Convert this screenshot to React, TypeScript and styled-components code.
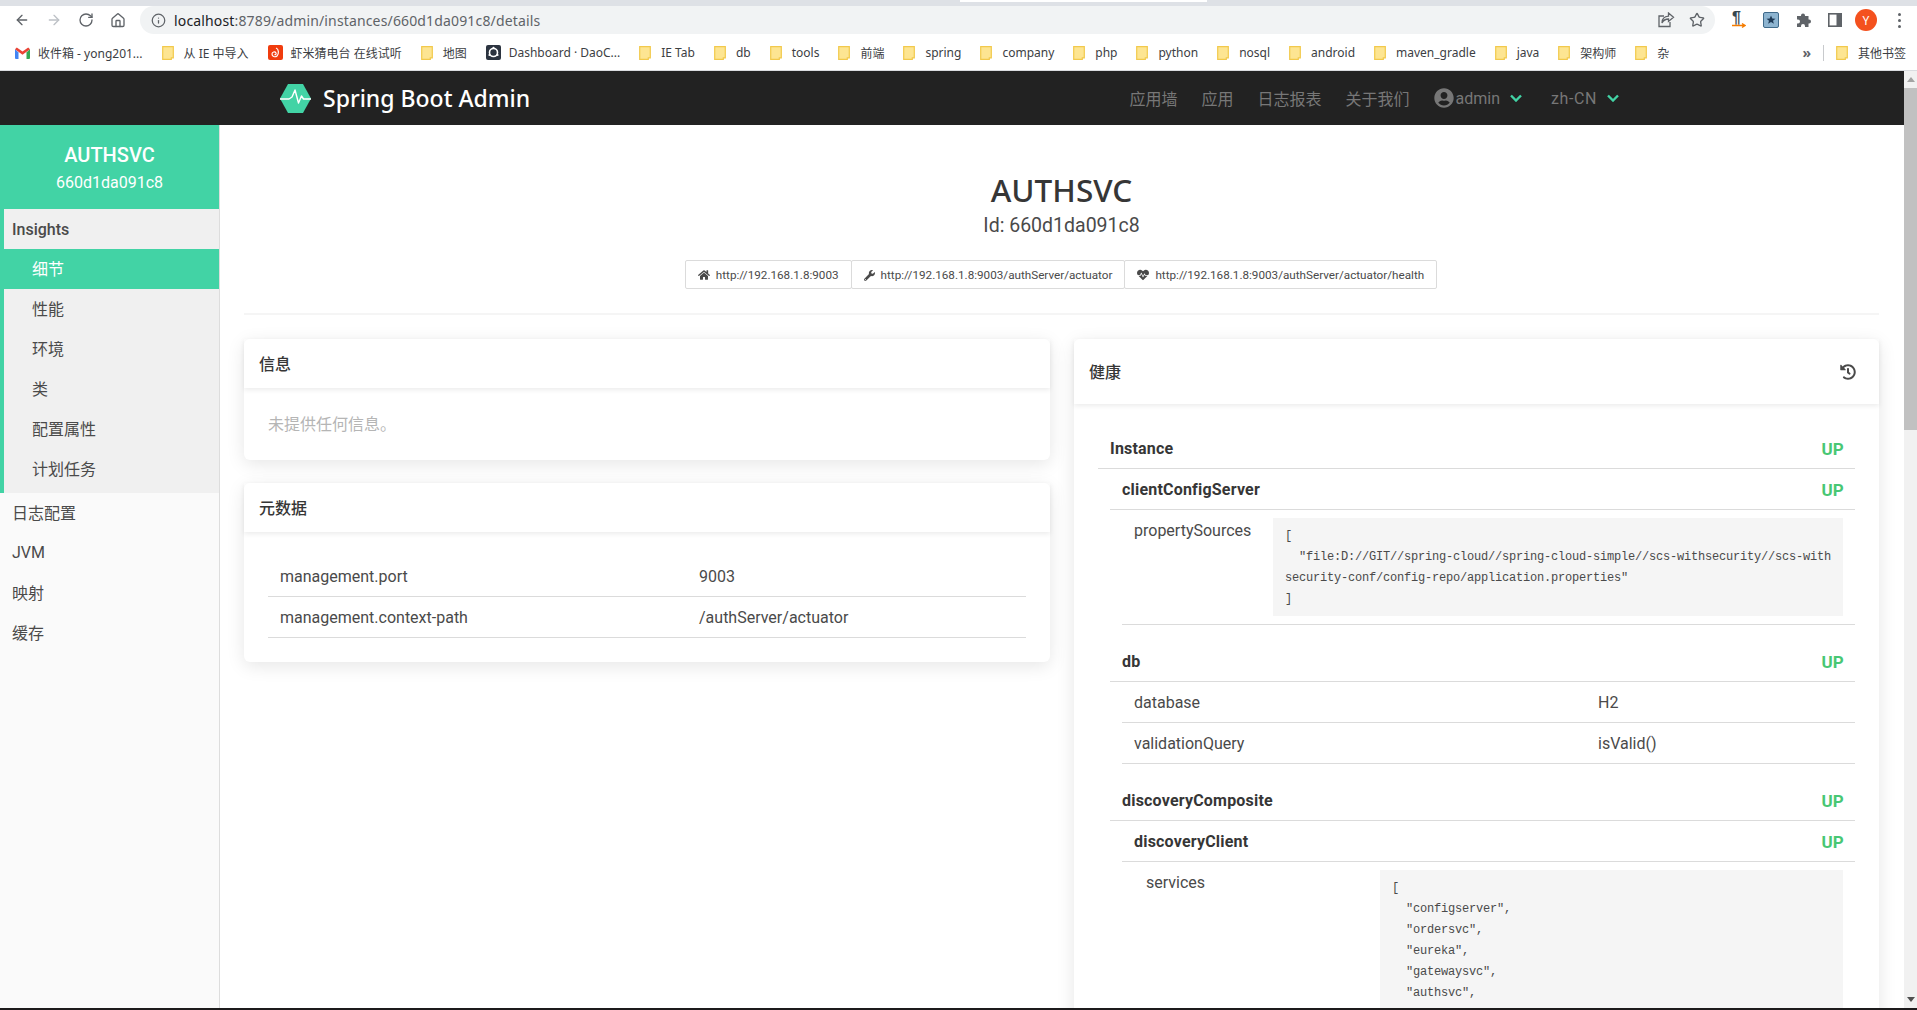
import type { ReactNode } from 'react';
import styled, { createGlobalStyle } from 'styled-components';
import { ArrowLeft, ArrowRight, House, Info, RotateCw, Star } from 'lucide-react';
import { FaHeartbeat, FaHistory, FaHome, FaUserCircle, FaWrench } from 'react-icons/fa';

const FONT = `Roboto, "Noto Sans CJK SC", sans-serif`;
const CHROME_FONT = `"Noto Sans", "Noto Sans CJK SC", sans-serif`;
const GREEN = '#42d3a5';

const GlobalStyle = createGlobalStyle`
  html, body {
    margin: 0;
    padding: 0;
    height: 100%;
    overflow: hidden;
    background: #fff;
  }
  * {
    box-sizing: border-box;
  }
  body {
    font-family: ${FONT};
    font-size: 16px;
    color: #4a4a4a;
  }
`;

const Screen = styled.div`
  width: 1917px;
  height: 1010px;
  display: flex;
  flex-direction: column;
  overflow: hidden;
`;

/* browser chrome */
const TabStrip = styled.div`
  height: 6px;
  flex: none;
  background: #dee1e6;
  padding-left: 960px;
`;
const ActiveTab = styled.div`
  width: 247px;
  height: 2px;
  background: #fff;
`;
const Toolbar = styled.div`
  height: 30px;
  flex: none;
  display: flex;
  align-items: center;
  padding: 0 0 2px 14px;
  background: #fff;
  font-family: ${CHROME_FONT};
`;
const ToolButton = styled.span<{ $dim?: boolean }>`
  width: 16px;
  height: 16px;
  margin-right: 16px;
  display: flex;
  align-items: center;
  justify-content: center;
  flex: none;
  color: ${(p) => (p.$dim ? '#bdc1c6' : '#5f6368')};
`;
const Omnibox = styled.div`
  width: 1575px;
  height: 28px;
  margin-left: -2px;
  flex: none;
  display: flex;
  align-items: center;
  padding: 0 10px 0 11px;
  border-radius: 14px;
  background: #f1f3f4;
  font-size: 14px;
  letter-spacing: 0.15px;
  color: #5f6368;
`;
const UrlHost = styled.span`
  margin-left: 8px;
  color: #202124;
`;
const OmniActions = styled.div`
  margin-left: auto;
  display: flex;
  align-items: center;
  gap: 14px;
  color: #5f6368;
`;
const ExtensionTray = styled.div`
  display: flex;
  align-items: center;
  gap: 17px;
  margin-left: 17px;
`;
const Avatar = styled.span`
  width: 22px;
  height: 22px;
  margin-left: -4px;
  border-radius: 50%;
  background: #f4511e;
  color: #fff;
  font-size: 12px;
  display: flex;
  align-items: center;
  justify-content: center;
`;
const MenuDots = styled.span`
  margin-left: 4px;
  width: 4px;
  display: flex;
  flex-direction: column;
  gap: 3px;
  i {
    width: 3px;
    height: 3px;
    border-radius: 50%;
    background: #5f6368;
  }
`;
const Bookmarks = styled.div`
  height: 35px;
  flex: none;
  display: flex;
  align-items: center;
  gap: 19px;
  padding: 0 0 1px 15px;
  background: #fff;
  border-bottom: 1px solid #dadce0;
  font-family: ${CHROME_FONT};
  font-size: 12px;
  color: #3c4043;
`;
const Bookmark = styled.span<{ $favicon?: boolean }>`
  display: flex;
  align-items: center;
  gap: ${(p) => (p.$favicon ? 8 : 10)}px;
  white-space: nowrap;
`;
const BookmarkEnd = styled.div`
  margin-left: auto;
  display: flex;
  align-items: center;
  gap: 12px;
  padding-right: 11px;
`;
const Chevrons = styled.span`
  font-size: 14px;
  font-weight: 700;
  color: #5f6368;
  line-height: 1;
`;
const Separator = styled.span`
  width: 1px;
  height: 16px;
  background: #c8cacd;
`;

/* spring boot admin page */
const Viewport = styled.div`
  height: 937px;
  flex: none;
  display: flex;
`;
const Page = styled.div`
  flex: 1;
  min-width: 0;
  display: flex;
  flex-direction: column;
`;
const Scrollbar = styled.div`
  width: 13px;
  flex: none;
  display: flex;
  flex-direction: column;
  align-items: center;
  background: #f1f1f1;
`;
const ScrollArrow = styled.span<{ $down?: boolean }>`
  height: 17px;
  flex: none;
  width: 100%;
  display: flex;
  align-items: center;
  justify-content: center;
  &::before {
    content: '';
    border-left: 4px solid transparent;
    border-right: 4px solid transparent;
    ${(p) =>
      p.$down
        ? 'border-top: 5px solid #505050;'
        : 'border-bottom: 5px solid #a3a3a3;'}
  }
`;
const ScrollThumb = styled.span`
  width: 100%;
  height: 342px;
  flex: none;
  background: #c1c1c1;
`;
const ScrollGap = styled.span`
  flex: 1;
`;
const BottomEdge = styled.div`
  height: 2px;
  flex: none;
  background: #1d1b1c;
`;

const Navbar = styled.nav`
  height: 54px;
  flex: none;
  background: #222;
`;
const NavContainer = styled.div`
  width: 1344px;
  height: 100%;
  margin: 0 auto;
  display: flex;
  align-items: center;
`;
const Brand = styled.div`
  display: flex;
  align-items: center;
  gap: 12px;
  font-family: ${CHROME_FONT};
  font-size: 23px;
  font-weight: 500;
  color: #fff;
`;
const NavMenu = styled.div`
  margin-left: auto;
  display: flex;
  align-items: center;
  gap: 24px;
  padding-right: 5px;
  color: #777;
`;
const NavDropdown = styled.span`
  display: flex;
  align-items: center;
  gap: 10px;
`;
const NavLang = styled(NavDropdown)`
  margin-left: 5px;
  letter-spacing: 0.6px;
`;
const NavUser = styled.span`
  display: flex;
  align-items: center;
  gap: 2px;
`;

const Body = styled.div`
  flex: 1;
  min-height: 0;
  display: flex;
`;
const Sidebar = styled.aside`
  width: 220px;
  flex: none;
  background: #fafafa;
  border-right: 1px solid #ddd;
`;
const SideHead = styled.div`
  height: 84px;
  padding-top: 4px;
  background: ${GREEN};
  color: #fff;
  text-align: center;
  display: flex;
  flex-direction: column;
  justify-content: center;
  line-height: 27px;
`;
const SideTitle = styled.div`
  font-size: 20px;
  font-weight: 500;
`;
const SideGroup = styled.div`
  background: #f0f0f0;
  border-left: 4px solid ${GREEN};
  padding-bottom: 4px;
`;
const SideItem = styled.div<{ $sub?: boolean; $active?: boolean; $bold?: boolean }>`
  height: 40px;
  display: flex;
  align-items: center;
  padding-left: ${(p) => (p.$sub ? 28 : 8)}px;
  padding-bottom: ${(p) => (p.$bold ? 0 : 2)}px;
  font-weight: ${(p) => (p.$bold ? 500 : 400)};
  ${(p) => p.$active && `background: ${GREEN}; color: #fff;`}
`;
const SideLink = styled(SideItem)`
  padding-left: 12px;
`;

const Main = styled.main`
  flex: 1;
  min-width: 0;
  padding: 45px 25px 0 24px;
  overflow: hidden;
`;
const Hero = styled.header`
  display: flex;
  flex-direction: column;
  align-items: center;
  height: 145px;
  border-bottom: 2px solid #f5f5f5;
`;
const HeroTitle = styled.h1`
  margin: 0;
  font-family: ${CHROME_FONT};
  font-size: 31.5px;
  line-height: 40px;
  font-weight: 500;
  color: #363636;
`;
const HeroSub = styled.div`
  height: 30px;
  padding-top: 1px;
  font-size: 19.5px;
  line-height: 30px;
  color: #4a4a4a;
`;
const LinkTags = styled.div`
  display: flex;
  margin-top: 20px;
`;
const LinkTag = styled.a`
  height: 29px;
  display: flex;
  align-items: center;
  gap: 6px;
  padding: 1px 12px 0;
  border: 1px solid #dbdbdb;
  border-radius: 2px;
  margin-left: -1px;
  font-size: 11.7px;
  color: #4a4a4a;
`;
const Columns = styled.div`
  display: grid;
  grid-template-columns: 806px 805px;
  gap: 24px;
  margin-top: 24px;
  align-items: start;
`;
const Stack = styled.div`
  display: flex;
  flex-direction: column;
  gap: 23px;
`;
const Card = styled.section`
  border-radius: 6px;
  background: #fff;
  box-shadow: 0 4px 18px rgba(10, 10, 10, 0.1);
`;
const CardHeader = styled.div<{ $tall?: boolean }>`
  height: ${(p) => (p.$tall ? 65 : 49)}px;
  display: flex;
  align-items: center;
  justify-content: space-between;
  padding: 0 23px 2px 15px;
  font-weight: 500;
  color: #363636;
  box-shadow: 0 2px 5px rgba(10, 10, 10, 0.08);
`;
const HistoryIcon = styled(FaHistory)`
  margin-top: 2px;
  color: #4a4a4a;
`;
const CardBody = styled.div`
  padding: 24px;
`;
const Muted = styled.div`
  padding-top: 1px;
  height: 24px;
  line-height: 24px;
  color: #b5b5b5;
`;
const KeyValue = styled.div<{ $level?: number; $labelWidth: number }>`
  margin-left: ${(p) => (p.$level ?? 0) * 12}px;
  display: grid;
  grid-template-columns: ${(p) => p.$labelWidth}px 1fr;
  border-bottom: 1px solid #dbdbdb;
  line-height: 24px;
  padding: 8px 0;
  color: #4a4a4a;
  & > span {
    padding: 1px 12px 0;
    margin-bottom: -1px;
    min-width: 0;
  }
`;
const StatusRow = styled.div<{ $level?: number; $spaced?: boolean }>`
  margin-left: ${(p) => (p.$level ?? 0) * 12}px;
  margin-top: ${(p) => (p.$spaced ? 16 : 0)}px;
  display: flex;
  justify-content: space-between;
  align-items: center;
  height: 41px;
  padding: 1px 11px 0 12px;
  border-bottom: 1px solid #dbdbdb;
  font-weight: 700;
  letter-spacing: 0.2px;
  color: #363636;
`;
const Up = styled.span`
  font-size: 17px;
  color: #48c774;
`;
const Code = styled.pre`
  margin: 0 12px;
  padding: 8px 8px 6px 12px;
  background: #f5f5f5;
  font-family: "Liberation Mono", monospace;
  font-size: 12px;
  letter-spacing: -0.2px;
  line-height: 21px;
  white-space: pre-wrap;
  word-break: break-all;
  color: #4a4a4a;
`;

function GmailIcon() {
  return (
    <svg width="15" height="12" viewBox="0 0 15 12">
      <path d="M0 2v9a1 1 0 0 0 1 1h2.500V5.500z" fill="#4285f4" />
      <path d="M15 2v9a1 1 0 0 1-1 1h-2.500V5.500z" fill="#34a853" />
      <path d="M0 2.200 1.800.4 7.500 4.600 13.200.4 15 2.200 7.500 7.800z" fill="#ea4335" />
    </svg>
  );
}

function XiamiIcon() {
  return (
    <svg width="15" height="15" viewBox="0 0 15 15">
      <rect width="15" height="15" rx="2" fill="#f03c0e" />
      <path
        d="M8 3c3 1 3 6 1 8-2 1.500-5 .5-5-2 0-2 3-3 4-1 .5 1-.5 2-1.500 1.500"
        fill="none"
        stroke="#fff"
        strokeWidth="1.200"
      />
    </svg>
  );
}

function DaoIcon() {
  return (
    <svg width="15" height="15" viewBox="0 0 15 15">
      <rect width="15" height="15" rx="2" fill="#2c3440" />
      <circle cx="7.500" cy="7.500" r="4" fill="none" stroke="#fff" strokeWidth="1.600" />
      <circle cx="7.500" cy="2.800" r="1.100" fill="#fff" />
      <circle cx="3.500" cy="10" r="1.100" fill="#fff" />
      <circle cx="11.500" cy="10" r="1.100" fill="#fff" />
    </svg>
  );
}

function FolderIcon() {
  return (
    <svg width="12" height="14" viewBox="0 0 12 14">
      <path
        d="M.7.7h10.600v11.200h-2v1.400H.7z"
        fill="#fde592"
        stroke="#f2c94c"
        strokeWidth="1.200"
      />
    </svg>
  );
}

function ShareIcon() {
  return (
    <svg width="17" height="16" viewBox="0 0 17 16" fill="none" stroke="#5f6368" strokeWidth="1.300">
      <path d="M12 10v4.500H1V4h5" />
      <path d="M10.500 1l5 4.200-5 4.200V7C7.500 7 5.500 8 4 11c0-4 2.500-6.500 6.500-6.800z" />
    </svg>
  );
}

function ParagraphIcon() {
  return (
    <svg width="14" height="18" viewBox="0 0 14 18">
      <text x="0" y="12" fontSize="16" fontWeight="700" fill="#37474f" fontFamily="Liberation Sans">
        ¶
      </text>
      <path d="M0 14.500h12M10 12.500l3 2-3 2" fill="none" stroke="#f57c00" strokeWidth="1.400" />
    </svg>
  );
}

function StarBoxIcon() {
  return (
    <svg width="16" height="16" viewBox="0 0 16 16">
      <rect x=".5" y=".5" width="15" height="15" rx="1.500" fill="#8db4d0" stroke="#3f6a8a" />
      <path
        d="M8 3.500l1.300 3 3.200.2-2.500 2 .9 3.100L8 10.100l-2.900 1.700.9-3.100-2.500-2 3.200-.2z"
        fill="#1f3b57"
      />
    </svg>
  );
}

function PuzzleIcon() {
  return (
    <svg width="15" height="15" viewBox="0 0 15 15">
      <path
        d="M5 3V2.500a2 2 0 0 1 4 0V3h3.500v3.500H13a2 2 0 0 1 0 4h-.5V14H9v-1a2 2 0 0 0-4 0v1H1v-3.500h1a2 2 0 0 0 0-4H1V3z"
        fill="#5f6368"
      />
    </svg>
  );
}

function SidePanelIcon() {
  return (
    <svg width="14" height="14" viewBox="0 0 14 14">
      <rect x=".8" y=".8" width="12.400" height="12.400" fill="#fff" stroke="#5f6368" strokeWidth="1.600" />
      <rect x="8.500" y="1" width="4.500" height="12" fill="#5f6368" />
    </svg>
  );
}

function PulseLogo() {
  return (
    <svg width="31" height="29" viewBox="0 0 31 29">
      <path d="M0 14.500 8 0h15l8 14.500L23 29H8z" fill={GREEN} />
      <path
        d="M0 15h9l3-2 3-7 3.500 13 3-7 2 3H31"
        fill="none"
        stroke="#fff"
        strokeWidth="1.400"
        strokeLinejoin="round"
      />
    </svg>
  );
}

function Chevron() {
  return (
    <svg width="12" height="8" viewBox="0 0 12 8">
      <path d="M1 1.500l5 5 5-5" fill="none" stroke={GREEN} strokeWidth="2.400" />
    </svg>
  );
}

const BOOKMARKS: { label: string; icon?: ReactNode }[] = [
  { label: '收件箱 - yong201...', icon: <GmailIcon /> },
  { label: '从 IE 中导入' },
  { label: '虾米猜电台 在线试听', icon: <XiamiIcon /> },
  { label: '地图' },
  { label: 'Dashboard · DaoC...', icon: <DaoIcon /> },
  { label: 'IE Tab' },
  { label: 'db' },
  { label: 'tools' },
  { label: '前端' },
  { label: 'spring' },
  { label: 'company' },
  { label: 'php' },
  { label: 'python' },
  { label: 'nosql' },
  { label: 'android' },
  { label: 'maven_gradle' },
  { label: 'java' },
  { label: '架构师' },
  { label: '杂' },
];

const INSIGHTS = ['细节', '性能', '环境', '类', '配置属性', '计划任务'];
const SIDE_LINKS = ['日志配置', 'JVM', '映射', '缓存'];
const NAV_LINKS = ['应用墙', '应用', '日志报表', '关于我们'];

const PROPERTY_SOURCES = `[
  "file:D://GIT//spring-cloud//spring-cloud-simple//scs-withsecurity//scs-withsecurity-conf/config-repo/application.properties"
]`;
const SERVICES = `[
  "configserver",
  "ordersvc",
  "eureka",
  "gatewaysvc",
  "authsvc",
  "usersvc"
]`;

function BrowserChrome() {
  return (
    <>
      <TabStrip>
        <ActiveTab />
      </TabStrip>
      <Toolbar>
        <ToolButton>
          <ArrowLeft size={18} />
        </ToolButton>
        <ToolButton $dim>
          <ArrowRight size={18} />
        </ToolButton>
        <ToolButton>
          <RotateCw size={16} />
        </ToolButton>
        <ToolButton>
          <House size={17} />
        </ToolButton>
        <Omnibox>
          <Info size={15} />
          <UrlHost>localhost</UrlHost>:8789/admin/instances/660d1da091c8/details
          <OmniActions>
            <ShareIcon />
            <Star size={16} />
          </OmniActions>
        </Omnibox>
        <ExtensionTray>
          <ParagraphIcon />
          <StarBoxIcon />
          <PuzzleIcon />
          <SidePanelIcon />
          <Avatar>Y</Avatar>
          <MenuDots>
            <i />
            <i />
            <i />
          </MenuDots>
        </ExtensionTray>
      </Toolbar>
      <Bookmarks>
        {BOOKMARKS.map((b) => (
          <Bookmark key={b.label} $favicon={!!b.icon}>
            {b.icon ?? <FolderIcon />}
            {b.label}
          </Bookmark>
        ))}
        <BookmarkEnd>
          <Chevrons>»</Chevrons>
          <Separator />
          <Bookmark>
            <FolderIcon />
            其他书签
          </Bookmark>
        </BookmarkEnd>
      </Bookmarks>
    </>
  );
}

function Nav() {
  return (
    <Navbar>
      <NavContainer>
        <Brand>
          <PulseLogo />
          Spring Boot Admin
        </Brand>
        <NavMenu>
          {NAV_LINKS.map((l) => (
            <span key={l}>{l}</span>
          ))}
          <NavDropdown>
            <NavUser>
              <FaUserCircle size={20} />
              admin
            </NavUser>
            <Chevron />
          </NavDropdown>
          <NavLang>
            zh-CN
            <Chevron />
          </NavLang>
        </NavMenu>
      </NavContainer>
    </Navbar>
  );
}

function Side() {
  return (
    <Sidebar>
      <SideHead>
        <SideTitle>AUTHSVC</SideTitle>
        <div>660d1da091c8</div>
      </SideHead>
      <SideGroup>
        <SideItem $bold>Insights</SideItem>
        {INSIGHTS.map((l, i) => (
          <SideItem key={l} $sub $active={i === 0}>
            {l}
          </SideItem>
        ))}
      </SideGroup>
      {SIDE_LINKS.map((l) => (
        <SideLink key={l}>{l}</SideLink>
      ))}
    </Sidebar>
  );
}

function App() {
  return (
    <Screen>
      <GlobalStyle />
      <BrowserChrome />
      <Viewport>
        <Page>
          <Nav />
          <Body>
            <Side />
            <Main>
              <Hero>
                <HeroTitle>AUTHSVC</HeroTitle>
                <HeroSub>Id: 660d1da091c8</HeroSub>
                <LinkTags>
                  <LinkTag>
                    <FaHome size={12} />
                    http://192.168.1.8:9003
                  </LinkTag>
                  <LinkTag>
                    <FaWrench size={11} />
                    http://192.168.1.8:9003/authServer/actuator
                  </LinkTag>
                  <LinkTag>
                    <FaHeartbeat size={12} />
                    http://192.168.1.8:9003/authServer/actuator/health
                  </LinkTag>
                </LinkTags>
              </Hero>
              <Columns>
                <Stack>
                  <Card>
                    <CardHeader>信息</CardHeader>
                    <CardBody>
                      <Muted>未提供任何信息。</Muted>
                    </CardBody>
                  </Card>
                  <Card>
                    <CardHeader>元数据</CardHeader>
                    <CardBody>
                      <KeyValue $labelWidth={419}>
                        <span>management.port</span>
                        <span>9003</span>
                      </KeyValue>
                      <KeyValue $labelWidth={419}>
                        <span>management.context-path</span>
                        <span>/authServer/actuator</span>
                      </KeyValue>
                    </CardBody>
                  </Card>
                </Stack>
                <Card>
                  <CardHeader $tall>
                    健康
                    <HistoryIcon size={16} />
                  </CardHeader>
                  <CardBody>
                    <StatusRow>
                      Instance
                      <Up>UP</Up>
                    </StatusRow>
                    <StatusRow $level={1}>
                      clientConfigServer
                      <Up>UP</Up>
                    </StatusRow>
                    <KeyValue $level={2} $labelWidth={139}>
                      <span>propertySources</span>
                      <Code>{PROPERTY_SOURCES}</Code>
                    </KeyValue>
                    <StatusRow $level={1} $spaced>
                      db
                      <Up>UP</Up>
                    </StatusRow>
                    <KeyValue $level={2} $labelWidth={464}>
                      <span>database</span>
                      <span>H2</span>
                    </KeyValue>
                    <KeyValue $level={2} $labelWidth={464}>
                      <span>validationQuery</span>
                      <span>isValid()</span>
                    </KeyValue>
                    <StatusRow $level={1} $spaced>
                      discoveryComposite
                      <Up>UP</Up>
                    </StatusRow>
                    <StatusRow $level={2}>
                      discoveryClient
                      <Up>UP</Up>
                    </StatusRow>
                    <KeyValue $level={3} $labelWidth={234}>
                      <span>services</span>
                      <Code>{SERVICES}</Code>
                    </KeyValue>
                  </CardBody>
                </Card>
              </Columns>
            </Main>
          </Body>
        </Page>
        <Scrollbar>
          <ScrollArrow />
          <ScrollThumb />
          <ScrollGap />
          <ScrollArrow $down />
        </Scrollbar>
      </Viewport>
      <BottomEdge />
    </Screen>
  );
}

export default App;
